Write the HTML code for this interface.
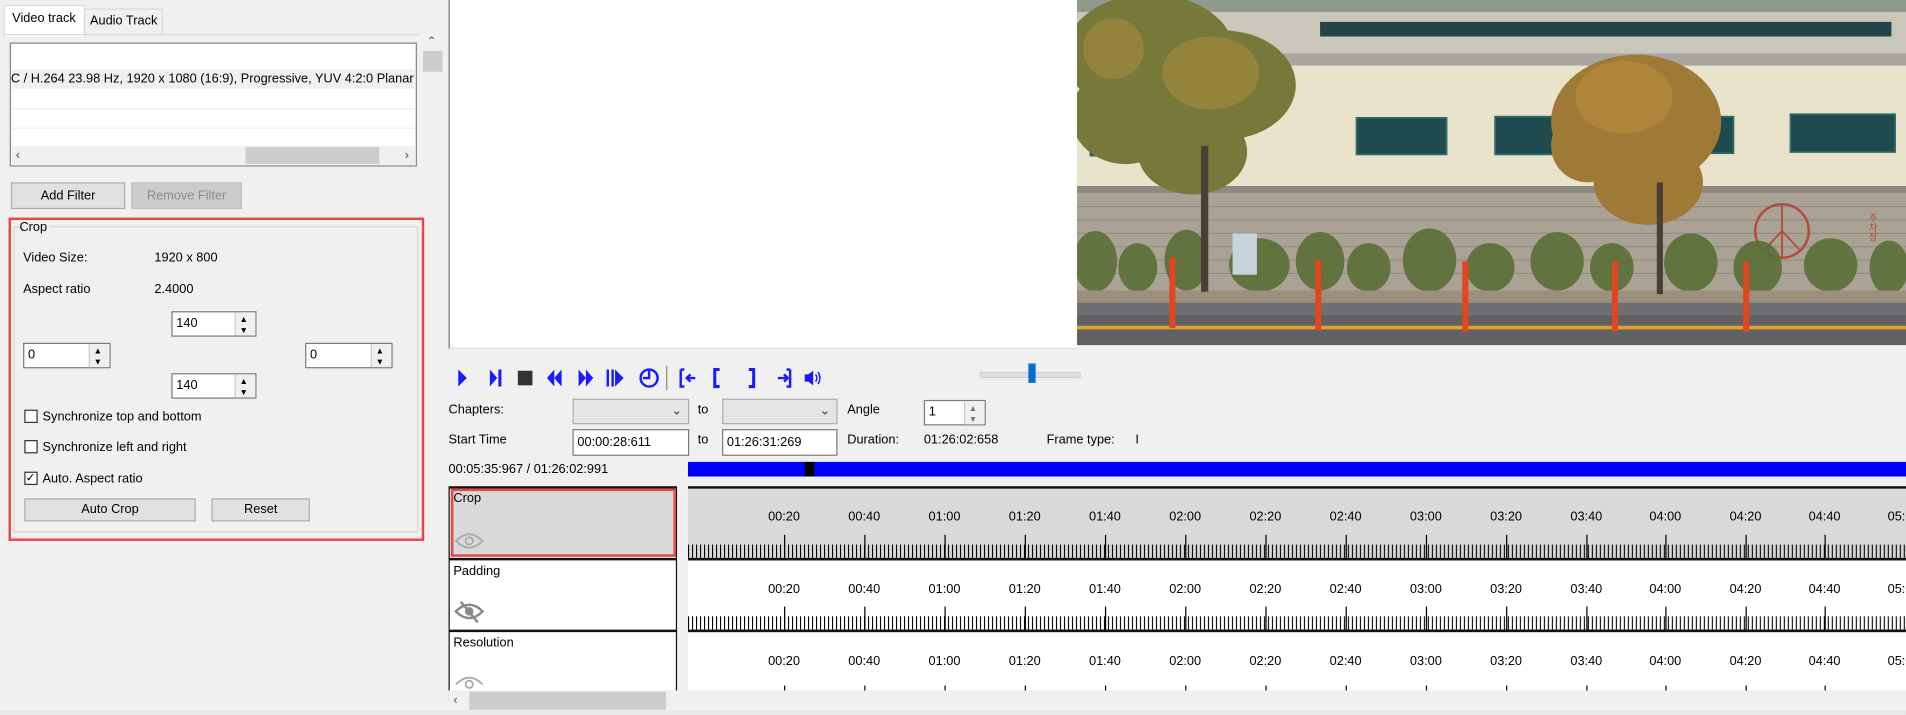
<!DOCTYPE html>
<html><head><meta charset="utf-8">
<style>
html,body{margin:0;padding:0;width:1906px;height:715px;overflow:hidden;background:#f0f0f0}
#w{position:absolute;left:0;top:0;width:1568px;height:588px;transform:scale(1.21556);transform-origin:0 0;font-family:"Liberation Sans",sans-serif;font-size:10.5px;color:#000;background:#f0f0f0}
.a{position:absolute}
.t{position:absolute;white-space:nowrap;line-height:13px}
.btn{position:absolute;background:#e1e1e1;border:1px solid #adadad;box-sizing:border-box;text-align:center;line-height:20px}
.inp{position:absolute;background:#fff;border:1px solid #7a7a7a;box-sizing:border-box;padding-left:3px;line-height:18px}
.spin{position:absolute;width:16px;background:#f0f0f0;border-left:1px solid #ccc;top:0;bottom:0;right:0}
.cb{position:absolute;width:11px;height:11px;border:1px solid #333;background:#fff;box-sizing:border-box}
.combo{position:absolute;background:#e5e5e5;border:1px solid #adadad;box-sizing:border-box}
.tl{position:absolute;left:566px;width:1002px;border-top:2px solid #111;box-sizing:border-box;overflow:hidden}
.lb{position:absolute;left:369px;width:188px;border:1px solid #111;border-top:2px solid #111;box-sizing:border-box;background:#fff}
</style></head><body><div id="w">
<div class="a" style="left:3px;top:4px;width:65px;height:25px;background:#fff;border:1px solid #d9d9d9;border-bottom:none"></div>
<div class="t" style="left:10px;top:9px">Video track</div>
<div class="a" style="left:69px;top:7px;width:63px;height:21px;background:#f0f0f0;border:1px solid #d9d9d9;border-bottom:none"></div>
<div class="t" style="left:74px;top:11px">Audio Track</div>
<div class="a" style="left:3px;top:28px;width:342px;height:1px;background:#d9d9d9"></div>
<div class="a" style="left:8px;top:35px;width:335px;height:102px;background:#fff;border:1px solid #828282;box-sizing:border-box;overflow:hidden">
 <div class="a" style="left:1px;top:21px;width:333px;height:16px;background:#f0f0f0"></div>
 <div class="t" style="left:-3px;top:23px">/C / H.264 23.98 Hz, 1920 x 1080 (16:9), Progressive, YUV 4:2:0 Planar</div>
 <div class="a" style="left:1px;top:53px;width:333px;height:1px;background:#eee"></div>
 <div class="a" style="left:1px;top:69px;width:333px;height:1px;background:#eee"></div>
 <div class="a" style="left:1px;top:84px;width:333px;height:16px;background:#f0f0f0"></div>
 <div class="a" style="left:193px;top:85px;width:110px;height:14px;background:#cdcdcd"></div>
 <div class="t" style="left:4px;top:86px;color:#555">&#8249;</div>
 <div class="t" style="left:324px;top:86px;color:#555">&#8250;</div>
</div>
<div class="a" style="left:347px;top:26px;width:17px;height:562px;background:#f0f0f0"></div>
<div class="t" style="left:351px;top:28px;color:#555;font-size:10px">&#8963;</div>
<div class="a" style="left:348px;top:42px;width:16px;height:17px;background:#cdcdcd"></div>
<div class="a" style="left:365px;top:0;width:4px;height:588px;background:#f0f0f0"></div>
<div class="btn" style="left:9px;top:150px;width:94px;height:22px">Add Filter</div>
<div class="btn" style="left:108px;top:150px;width:91px;height:22px;background:#cccccc;border-color:#bfbfbf;color:#8a8a8a">Remove Filter</div>
<div class="a" style="left:7px;top:179px;width:342px;height:266px;border:2px solid #e84646;box-sizing:border-box"></div>
<div class="a" style="left:11px;top:186px;width:333px;height:252px;border:1px solid #d5d5d5;box-sizing:border-box"></div>
<div class="t" style="left:16px;top:181px;background:#f0f0f0;padding-right:2px">Crop</div>
<div class="t" style="left:19px;top:206px">Video Size:</div>
<div class="t" style="left:127px;top:206px">1920 x 800</div>
<div class="t" style="left:19px;top:232px">Aspect ratio</div>
<div class="t" style="left:127px;top:232px">2.4000</div>
<div class="inp" style="left:141px;top:256px;width:70px;height:21px">140<div class="spin"><div class="t" style="left:3px;top:0;font-size:7px">&#9650;</div><div class="t" style="left:3px;top:9px;font-size:7px">&#9660;</div></div></div>
<div class="inp" style="left:19px;top:282px;width:72px;height:21px">0<div class="spin"><div class="t" style="left:3px;top:0;font-size:7px">&#9650;</div><div class="t" style="left:3px;top:9px;font-size:7px">&#9660;</div></div></div>
<div class="inp" style="left:251px;top:282px;width:72px;height:21px">0<div class="spin"><div class="t" style="left:3px;top:0;font-size:7px">&#9650;</div><div class="t" style="left:3px;top:9px;font-size:7px">&#9660;</div></div></div>
<div class="inp" style="left:141px;top:307px;width:70px;height:21px">140<div class="spin"><div class="t" style="left:3px;top:0;font-size:7px">&#9650;</div><div class="t" style="left:3px;top:9px;font-size:7px">&#9660;</div></div></div>
<div class="cb" style="left:20px;top:337px"></div><div class="t" style="left:35px;top:337px">Synchronize top and bottom</div>
<div class="cb" style="left:20px;top:362px"></div><div class="t" style="left:35px;top:362px">Synchronize left and right</div>
<div class="cb" style="left:20px;top:388px"><div class="t" style="left:0;top:-2px;font-size:10px">&#10003;</div></div><div class="t" style="left:35px;top:388px">Auto. Aspect ratio</div>
<div class="btn" style="left:20px;top:410px;width:141px;height:19px;line-height:17px">Auto Crop</div>
<div class="btn" style="left:174px;top:410px;width:81px;height:19px;line-height:17px">Reset</div>
<div class="a" style="left:369px;top:0;width:518px;height:287px;background:#fff;border-left:1px solid #777;border-bottom:1px solid #ddd;box-sizing:border-box"></div>
<svg class="a" style="left:886px;top:0" width="682" height="284" viewBox="0 0 682 284">
<rect width="682" height="284" fill="#d8d3c3"/>
<rect y="0" width="682" height="10" fill="#8f9a8a"/>
<rect y="10" width="682" height="34" fill="#c9c6bb"/>
<rect x="200" y="18" width="470" height="12" fill="#23424a"/>
<rect y="44" width="682" height="10" fill="#a7a6a0"/>
<rect y="54" width="682" height="100" fill="#e9e3cc"/>
<g fill="#1f4a4e" stroke="#2e6b68" stroke-width="1.5">
<rect x="11" y="100" width="70" height="28"/><rect x="230" y="97" width="74" height="30"/><rect x="344" y="96" width="80" height="31"/><rect x="470" y="96" width="70" height="30"/><rect x="587" y="94" width="86" height="31"/>
</g>
<rect y="153" width="682" height="6" fill="#8d8a82"/>
<rect y="159" width="682" height="80" fill="#aaa295"/>
<g stroke="#8e877b" stroke-width="0.8"><line x1="0" y1="170" x2="682" y2="170"/><line x1="0" y1="181" x2="682" y2="181"/><line x1="0" y1="192" x2="682" y2="192"/><line x1="0" y1="203" x2="682" y2="203"/><line x1="0" y1="214" x2="682" y2="214"/><line x1="0" y1="225" x2="682" y2="225"/></g>
<circle cx="580" cy="190" r="22" fill="none" stroke="#b54a3a" stroke-width="2"/>
<path d="M580 168v44M580 190l-14 15M580 190l14 15" stroke="#b54a3a" stroke-width="1.5" fill="none"/>
<text x="655" y="175" font-family="Noto Sans CJK KR, sans-serif" font-size="8" fill="#b54a3a" writing-mode="tb">주차장</text>
<g fill="#5a6f36" opacity="0.9"><ellipse cx="15" cy="215" rx="18" ry="25"/><ellipse cx="50" cy="220" rx="16" ry="20"/><ellipse cx="90" cy="214" rx="18" ry="25"/><ellipse cx="150" cy="218" rx="25" ry="22"/><ellipse cx="200" cy="215" rx="20" ry="24"/><ellipse cx="240" cy="220" rx="18" ry="20"/><ellipse cx="290" cy="214" rx="22" ry="26"/><ellipse cx="340" cy="220" rx="20" ry="20"/><ellipse cx="395" cy="215" rx="22" ry="24"/><ellipse cx="440" cy="220" rx="18" ry="20"/><ellipse cx="505" cy="216" rx="22" ry="24"/><ellipse cx="560" cy="220" rx="20" ry="22"/><ellipse cx="620" cy="218" rx="22" ry="22"/><ellipse cx="668" cy="220" rx="16" ry="22"/></g>
<rect x="128" y="192" width="20" height="34" fill="#c8d4dc"/>
<rect y="239" width="682" height="10" fill="#9c8f7e"/>
<rect y="249" width="682" height="10" fill="#6e6e70"/>
<rect y="259" width="682" height="25" fill="#5f6165"/>
<rect y="268" width="682" height="3" fill="#e2a12a"/>
<g fill="#76793a"><ellipse cx="60" cy="45" rx="70" ry="50"/><ellipse cx="120" cy="70" rx="60" ry="45"/><ellipse cx="95" cy="125" rx="45" ry="35"/><ellipse cx="40" cy="95" rx="45" ry="40"/></g>
<g fill="#a88a3d" opacity="0.6"><ellipse cx="110" cy="60" rx="40" ry="30"/><ellipse cx="30" cy="40" rx="25" ry="25"/></g>
<g fill="#9e7a36"><ellipse cx="460" cy="100" rx="70" ry="55"/><ellipse cx="470" cy="150" rx="45" ry="35"/><ellipse cx="420" cy="120" rx="30" ry="30"/></g>
<g fill="#b58a3d" opacity="0.7"><ellipse cx="450" cy="80" rx="40" ry="30"/></g>
<rect x="102" y="120" width="6" height="120" fill="#4a3f35"/><rect x="477" y="150" width="5" height="92" fill="#4a3f35"/>
<g fill="#e0461f"><rect x="76" y="212" width="5" height="58"/><rect x="196" y="214" width="5" height="58"/><rect x="317" y="215" width="5" height="58"/><rect x="440" y="215" width="5" height="58"/><rect x="548" y="215" width="5" height="58"/></g>
</svg>
<svg class="a" style="left:372px;top:300px" width="310" height="22" viewBox="0 0 310 22" fill="#1a1aff">
<polygon points="5,4 12,11 5,18"/>
<polygon points="31,4 37,11 31,18"/><rect x="38" y="4" width="2.5" height="14"/>
<rect x="54" y="5" width="12" height="12" fill="#333"/>
<polygon points="84,4 78,11 84,18"/><polygon points="90,4 84,11 90,18" />
<polygon points="104,4 110,11 104,18"/><polygon points="110,4 116,11 110,18"/>
<rect x="127" y="4" width="2" height="14"/><rect x="131" y="4" width="2" height="14"/><polygon points="134,4 141,11 134,18"/>
<circle cx="162" cy="11" r="7" fill="none" stroke="#1a1aff" stroke-width="2"/><path d="M162 5v6h-5" fill="none" stroke="#1a1aff" stroke-width="2"/>
<rect x="176" y="1" width="1" height="20" fill="#888"/>
<path d="M188 4v14h3M188 4h3M193 11h7M196 8l-3 3 3 3" fill="none" stroke="#1a1aff" stroke-width="2"/>
<path d="M220 4h-4v14h4" fill="none" stroke="#1a1aff" stroke-width="2.5"/>
<path d="M244 4h4v14h-4" fill="none" stroke="#1a1aff" stroke-width="2.5"/>
<path d="M268 11h8M273 8l3 3-3 3M278 4v14h-3M278 4h-3" fill="none" stroke="#1a1aff" stroke-width="2"/>
<polygon points="290,8 293,8 297,5 297,17 293,14 290,14"/><path d="M299 8q2 3 0 6M301 6q3 5 0 10" fill="none" stroke="#1a1aff" stroke-width="1.2"/>
</svg>
<div class="a" style="left:806px;top:306px;width:81px;height:3px;background:#e0e0e0;border:1px solid #d0d0d0"></div>
<div class="a" style="left:846px;top:299px;width:6px;height:16px;background:#0a6ed1"></div>
<div class="t" style="left:369px;top:331px">Chapters:</div>
<div class="combo" style="left:471px;top:328px;width:96px;height:21px"><div class="t" style="right:5px;top:3px;color:#444">&#8964;</div></div>
<div class="t" style="left:574px;top:331px">to</div>
<div class="combo" style="left:594px;top:328px;width:95px;height:21px"><div class="t" style="right:5px;top:3px;color:#444">&#8964;</div></div>
<div class="t" style="left:697px;top:331px">Angle</div>
<div class="inp" style="left:760px;top:329px;width:51px;height:21px">1<div class="spin"><div class="t" style="left:3px;top:0;font-size:7px;color:#777">&#9650;</div><div class="t" style="left:3px;top:9px;font-size:7px;color:#777">&#9660;</div></div></div>
<div class="t" style="left:369px;top:356px">Start Time</div>
<div class="inp" style="left:471px;top:353px;width:96px;height:22px;line-height:20px">00:00:28:611</div>
<div class="t" style="left:574px;top:356px">to</div>
<div class="inp" style="left:594px;top:353px;width:95px;height:22px;line-height:20px">01:26:31:269</div>
<div class="t" style="left:697px;top:356px">Duration:</div>
<div class="t" style="left:760px;top:356px">01:26:02:658</div>
<div class="t" style="left:861px;top:356px">Frame type:</div>
<div class="t" style="left:934px;top:356px">I</div>
<div class="t" style="left:369px;top:380px">00:05:35:967 / 01:26:02:991</div>
<div class="a" style="left:566px;top:380px;width:1002px;height:12px;background:#0000ff"></div>
<div class="a" style="left:662px;top:380px;width:8px;height:12px;background:#000"></div>
<div class="lb" style="top:400px;height:60px;background:#d9d9d9"></div>
<div class="a" style="left:371px;top:402px;width:185px;height:56px;border:2px solid #e84646;box-sizing:border-box"></div>
<div class="t" style="left:373px;top:404px">Crop</div>
<div class="lb" style="top:459px;height:61px"></div>
<div class="t" style="left:373px;top:464px">Padding</div>
<div class="lb" style="top:518px;height:60px"></div>
<div class="t" style="left:373px;top:523px">Resolution</div>
<svg class="a" style="left:373px;top:435px" width="26" height="20" viewBox="0 0 26 20"><path d="M2 10q11-11 22 0q-11 11-22 0z" fill="none" stroke="#aaa" stroke-width="1.5"/><circle cx="13" cy="10" r="3" fill="none" stroke="#aaa" stroke-width="1.5"/></svg>
<svg class="a" style="left:373px;top:492px" width="26" height="22" viewBox="0 0 26 22"><path d="M2 11q11-11 22 0q-11 11-22 0z" fill="none" stroke="#888" stroke-width="2"/><circle cx="13" cy="11" r="3.5" fill="#888"/><line x1="6" y1="3" x2="20" y2="20" stroke="#888" stroke-width="2"/></svg>
<svg class="a" style="left:373px;top:553px" width="26" height="15" viewBox="0 0 26 15"><path d="M2 10q11-11 22 0" fill="none" stroke="#aaa" stroke-width="1.5"/><circle cx="13" cy="10" r="3" fill="none" stroke="#aaa" stroke-width="1.5"/></svg>
<div class="tl" style="top:400px;height:62px;background:#d9d9d9"></div>
<div class="tl" style="top:459px;height:62px;background:#fff"></div>
<div class="tl" style="top:518px;height:52px;background:#fff"></div>
<svg class="a" style="left:566px;top:400px" width="1002" height="170">
<defs>
<pattern id="tk" x="0" y="0" width="3.29" height="20" patternUnits="userSpaceOnUse"><rect x="0" y="0" width="0.9" height="20" fill="#000"/></pattern>
</defs>
<rect x="0" y="48" width="1002" height="11" fill="url(#tk)"/>
<rect x="0" y="107" width="1002" height="11" fill="url(#tk)"/>
<g fill="#000">
<g id="big"><rect x="79" y="40" width="1" height="19"/><rect x="145" y="40" width="1" height="19"/><rect x="211" y="40" width="1" height="19"/><rect x="277" y="40" width="1" height="19"/><rect x="343" y="40" width="1" height="19"/><rect x="409" y="40" width="1" height="19"/><rect x="475" y="40" width="1" height="19"/><rect x="541" y="40" width="1" height="19"/><rect x="607" y="40" width="1" height="19"/><rect x="673" y="40" width="1" height="19"/><rect x="739" y="40" width="1" height="19"/><rect x="804" y="40" width="1" height="19"/><rect x="870" y="40" width="1" height="19"/><rect x="935" y="40" width="1" height="19"/></g>
<use href="#big" y="59"/><use href="#big" y="124"/>
</g>
<rect x="0" y="59" width="1002" height="2" fill="#111"/>
<rect x="0" y="118" width="1002" height="2" fill="#111"/>
<g font-family="Liberation Sans, sans-serif" font-size="10.5" text-anchor="middle" id="lbl">
<text x="79" y="28">00:20</text><text x="145" y="28">00:40</text><text x="211" y="28">01:00</text><text x="277" y="28">01:20</text><text x="343" y="28">01:40</text><text x="409" y="28">02:00</text><text x="475" y="28">02:20</text><text x="541" y="28">02:40</text><text x="607" y="28">03:00</text><text x="673" y="28">03:20</text><text x="739" y="28">03:40</text><text x="804" y="28">04:00</text><text x="870" y="28">04:20</text><text x="935" y="28">04:40</text><text x="1000" y="28">05:00</text>
</g>
<use href="#lbl" y="60"/><use href="#lbl" y="119"/>
</svg>
<div class="a" style="left:369px;top:568px;width:1199px;height:17px;background:#f0f0f0"></div>
<div class="t" style="left:373px;top:570px;color:#555">&#8249;</div>
<div class="a" style="left:386px;top:569px;width:162px;height:15px;background:#cdcdcd"></div>
<div class="a" style="left:0;top:585px;width:1568px;height:3px;background:#e6e6e6"></div>
</div></body></html>
